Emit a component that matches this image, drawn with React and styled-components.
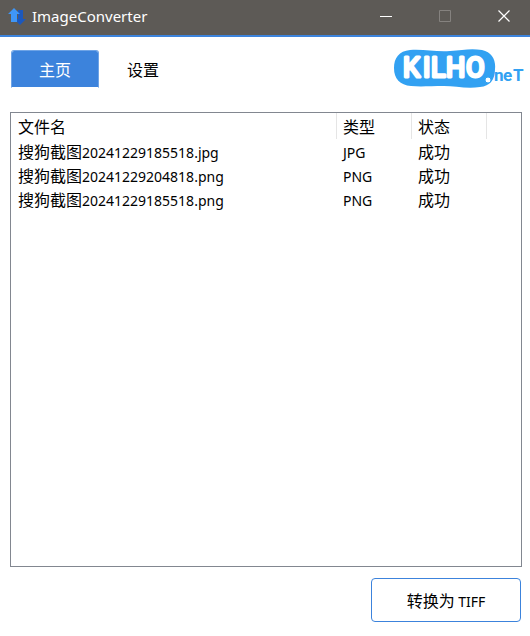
import React, { useState } from "react";
import styled, { createGlobalStyle } from "styled-components";

const colors = {
  accent: "#3c83dc",
  titleBar: "#5d5a56",
  frame: "#828790",
  divider: "#e5e5e5",
  logo: "#32a1f2"
};

const GlobalStyle = createGlobalStyle`
  * {
    box-sizing: border-box;
  }

  body {
    margin: 0;
    background-color: #fff;
    color: #000;
    font: 16px/24px "Noto Sans CJK SC", sans-serif;
  }

  button {
    font: inherit;
    color: inherit;
  }
`;

const Window = styled.div`
  display: flex;
  flex-direction: column;
  min-height: 100vh;
`;

const TitleBar = styled.header`
  display: flex;
  align-items: center;
  height: 37px;
  padding: 0 0 3px 8px;
  border-bottom: 2px solid ${colors.accent};
  background-color: ${colors.titleBar};
  color: #fff;
`;

const Title = styled.h1`
  flex: 1 1 auto;
  margin: 0 0 0 6px;
  font: 400 15px/24px "Noto Sans", sans-serif;
`;

const Controls = styled.div`
  display: flex;
  gap: 7px;
`;

const ControlButton = styled.button`
  display: grid;
  place-items: center;
  width: 52px;
  height: 32px;
  padding: 0;
  border: 0;
  background: none;
  color: #fff;

  &:disabled {
    color: #85827f;
  }
`;

const Toolbar = styled.div`
  display: flex;
  align-items: center;
  justify-content: space-between;
  padding: 12px 6px 0 11px;
`;

const Tabs = styled.nav`
  display: flex;
`;

const Tab = styled.button`
  width: 88px;
  height: 38px;
  padding: 0;
  border: 1px solid ${props => (props.$active ? "#6fa4e6" : "transparent")};
  border-bottom-color: transparent;
  border-radius: 3px 3px 0 0;
  background-color: ${props => (props.$active ? colors.accent : "#fff")};
  background-clip: padding-box;
  color: ${props => (props.$active ? "#fff" : "#000")};
`;

const ListFrame = styled.main`
  flex: 1 1 auto;
  margin: 23px 8px 0 10px;
  border: 1px solid ${colors.frame};
`;

const Table = styled.table`
  width: 100%;
  table-layout: fixed;
  border-collapse: separate;
  border-spacing: 0;

  th:first-child,
  td:first-child {
    padding-left: 7px;
  }
`;

const Column = styled.col`
  width: ${props => props.$width};
`;

const HeadCell = styled.th`
  height: 26px;
  padding: 1px 6px;
  border-right: 1px solid ${props => (props.$last ? "transparent" : colors.divider)};
  font-weight: 400;
  line-height: 24px;
  text-align: left;
`;

const Cell = styled.td`
  height: 24px;
  padding: 0 6px;
  line-height: 24px;
  white-space: nowrap;
`;

const Latin = styled.span`
  font-family: "Noto Sans", sans-serif;
  font-size: 14px;
  line-height: 14px;
`;

const Footer = styled.footer`
  display: flex;
  justify-content: flex-end;
  padding: 11px 9px 14px;
`;

const ConvertButton = styled.button`
  width: 150px;
  height: 44px;
  padding: 0;
  border: 1px solid ${colors.accent};
  border-radius: 4px;
  background-color: #fff;
`;

const AppIcon = () => (
  <svg width="18" height="20" viewBox="0 0 18 20" aria-hidden="true">
    <path d="M10 4h5v9h3l-6 6-6-6h4z" fill="#1c58bd" />
    <path d="M6 2l6 6H9v8H3V8H0z" fill="#3f96f7" />
  </svg>
);

const Logo = () => (
  <svg width="132" height="40" viewBox="0 0 132 40" role="img" aria-label="KILHO.net">
    <path
      d="M18 1c14-1 26 2 40 1C71 1 79-1 90 1c10 2 14 10 13 19 0 11-5 17-15 18-13 2-25-1-36-1-14 0-23 1-33 0C8 36 2 30 2 19 2 9 7 2 18 1z"
      fill={colors.logo}
    />
    <g fontFamily="Roboto, sans-serif" strokeLinejoin="round">
      <text
        x="11 31 39 54 74"
        y="28"
        fontSize="27"
        fontWeight="400"
        fill="#fff"
        stroke="#fff"
        strokeWidth="3"
      >
        KILHO
      </text>
      <circle cx="96" cy="31" r="3" fill="#fff" stroke={colors.logo} />
      <text x="102 111 121" y="32" fontSize="17" fontWeight="700" fill={colors.logo}>
        neT
      </text>
    </g>
  </svg>
);

const tabs = ["主页", "设置"];

const files = [
  { prefix: "搜狗截图", name: "20241229185518.jpg", type: "JPG", status: "成功" },
  { prefix: "搜狗截图", name: "20241229204818.png", type: "PNG", status: "成功" },
  { prefix: "搜狗截图", name: "20241229185518.png", type: "PNG", status: "成功" }
];

const App = () => {
  const [active, setActive] = useState("主页");

  return (
    <>
      <GlobalStyle />
      <Window>
        <TitleBar>
          <AppIcon />
          <Title>ImageConverter</Title>
          <Controls>
            <ControlButton type="button" aria-label="Minimize">
              <svg width="13" height="13" stroke="currentColor">
                <path d="M0 6.5h12" />
              </svg>
            </ControlButton>
            <ControlButton type="button" aria-label="Maximize" disabled>
              <svg width="12" height="12" fill="none" stroke="currentColor">
                <path d="M.5.5h11v11H.5z" />
              </svg>
            </ControlButton>
            <ControlButton type="button" aria-label="Close">
              <svg width="12" height="12" stroke="currentColor" strokeWidth="1.2">
                <path d="M.5.5l11 11M11.5.5l-11 11" />
              </svg>
            </ControlButton>
          </Controls>
        </TitleBar>
        <Toolbar>
          <Tabs>
            {tabs.map(tab => (
              <Tab
                key={tab}
                type="button"
                $active={tab === active}
                onClick={() => setActive(tab)}
              >
                {tab}
              </Tab>
            ))}
          </Tabs>
          <Logo />
        </Toolbar>
        <ListFrame>
          <Table>
            <colgroup>
              <Column />
              <Column $width="75px" />
              <Column $width="75px" />
              <Column $width="34px" />
            </colgroup>
            <thead>
              <tr>
                <HeadCell scope="col">文件名</HeadCell>
                <HeadCell scope="col">类型</HeadCell>
                <HeadCell scope="col">状态</HeadCell>
                <HeadCell as="td" $last />
              </tr>
            </thead>
            <tbody>
              {files.map((file, index) => (
                <tr key={index}>
                  <Cell>
                    {file.prefix}
                    <Latin>{file.name}</Latin>
                  </Cell>
                  <Cell>
                    <Latin>{file.type}</Latin>
                  </Cell>
                  <Cell>{file.status}</Cell>
                  <Cell />
                </tr>
              ))}
            </tbody>
          </Table>
        </ListFrame>
        <Footer>
          <ConvertButton type="button">
            转换为 <Latin>TIFF</Latin>
          </ConvertButton>
        </Footer>
      </Window>
    </>
  );
};

export default App;
